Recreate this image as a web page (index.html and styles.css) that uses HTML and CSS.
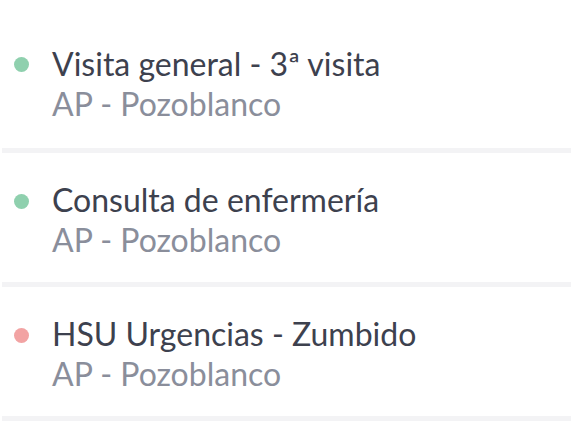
FILE: index.html
```html
<!DOCTYPE html>
<html lang="es">
<head>
<meta charset="UTF-8">
<meta name="viewport" content="width=device-width, initial-scale=1.0">
<title>Citas</title>
<link rel="stylesheet" href="styles.css">
</head>
<body>
<ul class="visits">
    <li class="visit first">
        <span class="dot done"></span>
        <div class="info">
            <div class="title">Visita general - 3ª visita</div>
            <div class="place">AP - Pozoblanco</div>
        </div>
    </li>
    <li class="visit">
        <span class="dot done"></span>
        <div class="info">
            <div class="title">Consulta de enfermería</div>
            <div class="place">AP - Pozoblanco</div>
        </div>
    </li>
    <li class="visit">
        <span class="dot urgent"></span>
        <div class="info">
            <div class="title">HSU Urgencias - Zumbido</div>
            <div class="place">AP - Pozoblanco</div>
        </div>
    </li>
</ul>
</body>
</html>
```

FILE: styles.css
```css
body {
    margin: 0;
    background-color: #fff;
    font-family: Lato, "Open Sans", sans-serif;
}
.visits {
    list-style: none;
    margin: 0;
    padding: 0 0 0 2px;
}
.visit {
    display: flex;
    align-items: flex-start;
    height: 129px;
    border-bottom: 5px solid #f3f3f5;
}
.visit.first {
    height: 148px;
}
.info {
    padding-top: 27px;
}
.visit.first .info {
    padding-top: 44px;
}
.dot {
    width: 15px;
    height: 15px;
    border-radius: 50%;
    margin: 41px 23px 0 12px;
    flex-shrink: 0;
}
.visit.first .dot {
    margin-top: 57px;
}
.dot.done {
    background-color: #8fd0ae;
}
.dot.urgent {
    background-color: #f2a3a3;
}
.title {
    font-size: 32px;
    line-height: 40px;
    color: #3d414e;
}
.place {
    font-size: 32px;
    line-height: 40px;
    color: #8a8e9b;
}
```
